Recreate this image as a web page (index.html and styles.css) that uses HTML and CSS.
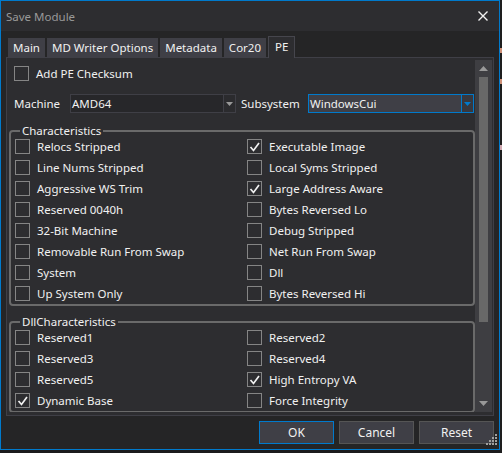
FILE: index.html
```html
<!DOCTYPE html>
<html>
<head>
<meta charset="utf-8">
<title>Save Module</title>
<link rel="stylesheet" href="styles.css">
</head>
<body>
<div class="window">
  <div class="titlebar">
    <span class="title">Save Module</span>
    <svg class="close" width="10" height="10" viewBox="0 0 10 10"><path d="M0.5 0.5L9.5 9.5M9.5 0.5L0.5 9.5" stroke="#f1f1f1" stroke-width="1.4"/></svg>
  </div>
  <div class="tabs">
    <div class="tab">Main</div>
    <div class="tab">MD Writer Options</div>
    <div class="tab">Metadata</div>
    <div class="tab">Cor20</div>
    <div class="tab active">PE</div>
  </div>
  <div class="panel">
    <div class="content">
      <div class="cb top-cb"><span class="box"></span><span>Add PE Checksum</span></div>
      <div class="machine-row">
        <span class="lbl lbl-machine">Machine</span>
        <div class="combo"><span class="combo-text">AMD64</span><span class="combo-btn"><svg width="7" height="4" viewBox="0 0 7 4"><path d="M0 0H7L3.5 4Z" fill="#999"/></svg></span></div>
        <span class="lbl lbl-sub">Subsystem</span>
        <div class="combo focus"><span class="combo-text">WindowsCui</span><span class="combo-btn"><svg width="7" height="4" viewBox="0 0 7 4"><path d="M0 0H7L3.5 4Z" fill="#007acc"/></svg></span></div>
      </div>
      <div class="group">
        <div class="group-title">Characteristics</div>
        <div class="grid">
          <div class="cb"><span class="box"></span><span>Relocs Stripped</span></div>
          <div class="cb"><span class="box"><svg width="13" height="13" viewBox="0 0 13 13"><path d="M2.5 7L5.5 10.5L11 3" fill="none" stroke="#f1f1f1" stroke-width="1.7"/></svg></span><span>Executable Image</span></div>
          <div class="cb"><span class="box"></span><span>Line Nums Stripped</span></div>
          <div class="cb"><span class="box"></span><span>Local Syms Stripped</span></div>
          <div class="cb"><span class="box"></span><span>Aggressive WS Trim</span></div>
          <div class="cb"><span class="box"><svg width="13" height="13" viewBox="0 0 13 13"><path d="M2.5 7L5.5 10.5L11 3" fill="none" stroke="#f1f1f1" stroke-width="1.7"/></svg></span><span>Large Address Aware</span></div>
          <div class="cb"><span class="box"></span><span>Reserved 0040h</span></div>
          <div class="cb"><span class="box"></span><span>Bytes Reversed Lo</span></div>
          <div class="cb"><span class="box"></span><span>32-Bit Machine</span></div>
          <div class="cb"><span class="box"></span><span>Debug Stripped</span></div>
          <div class="cb"><span class="box"></span><span>Removable Run From Swap</span></div>
          <div class="cb"><span class="box"></span><span>Net Run From Swap</span></div>
          <div class="cb"><span class="box"></span><span>System</span></div>
          <div class="cb"><span class="box"></span><span>Dll</span></div>
          <div class="cb"><span class="box"></span><span>Up System Only</span></div>
          <div class="cb"><span class="box"></span><span>Bytes Reversed Hi</span></div>
        </div>
      </div>
      <div class="group group-second">
        <div class="group-title">DllCharacteristics</div>
        <div class="grid">
          <div class="cb"><span class="box"></span><span>Reserved1</span></div>
          <div class="cb"><span class="box"></span><span>Reserved2</span></div>
          <div class="cb"><span class="box"></span><span>Reserved3</span></div>
          <div class="cb"><span class="box"></span><span>Reserved4</span></div>
          <div class="cb"><span class="box"></span><span>Reserved5</span></div>
          <div class="cb"><span class="box"><svg width="13" height="13" viewBox="0 0 13 13"><path d="M2.5 7L5.5 10.5L11 3" fill="none" stroke="#f1f1f1" stroke-width="1.7"/></svg></span><span>High Entropy VA</span></div>
          <div class="cb"><span class="box"><svg width="13" height="13" viewBox="0 0 13 13"><path d="M2.5 7L5.5 10.5L11 3" fill="none" stroke="#f1f1f1" stroke-width="1.7"/></svg></span><span>Dynamic Base</span></div>
          <div class="cb"><span class="box"></span><span>Force Integrity</span></div>
        </div>
      </div>
    </div>
    <div class="scrollbar">
      <div class="sb-arrow"><svg width="9" height="5" viewBox="0 0 9 5"><path d="M0 5L4.5 0L9 5Z" fill="#999"/></svg></div>
      <div class="sb-track"><div class="sb-thumb"></div></div>
      <div class="sb-arrow"><svg width="9" height="5" viewBox="0 0 9 5"><path d="M0 0L4.5 5L9 0Z" fill="#999"/></svg></div>
    </div>
  </div>
  <div class="footer">
    <button class="btn default">OK</button>
    <button class="btn">Cancel</button>
    <button class="btn">Reset</button>
  </div>
  <svg class="grip" width="12" height="12" viewBox="0 0 12 12">
    <g fill="#a0a0a0">
      <rect x="9" y="0" width="2" height="2"/>
      <rect x="6" y="3" width="2" height="2"/><rect x="9" y="3" width="2" height="2"/>
      <rect x="3" y="6" width="2" height="2"/><rect x="6" y="6" width="2" height="2"/><rect x="9" y="6" width="2" height="2"/>
      <rect x="0" y="9" width="2" height="2"/><rect x="3" y="9" width="2" height="2"/><rect x="6" y="9" width="2" height="2"/><rect x="9" y="9" width="2" height="2"/>
    </g>
  </svg>
</div>
<div class="behind">
  <div class="mark m1"></div>
  <div class="mark m2"></div>
  <div class="mark m3"></div>
</div>
</body>
</html>
```

FILE: styles.css
```css
* { box-sizing: border-box; }
html, body { margin: 0; padding: 0; }
body {
  width: 502px;
  height: 453px;
  overflow: hidden;
  background: #1b1b1c;
  display: flex;
  align-items: flex-start;
  font-family: "Noto Sans", "Open Sans", sans-serif;
  font-size: 11.5px;
  color: #f1f1f1;
}
.window {
  flex: none;
  width: 500px;
  height: 450px;
  border: 1px solid #007acc;
  background: #252526;
  position: relative;
  display: flex;
  flex-direction: column;
}
.titlebar {
  flex: none;
  height: 30px;
  background: #2d2d30;
  display: flex;
  align-items: center;
  justify-content: space-between;
  padding: 0 11px 0 5px;
}
.title { color: #999999; }
.close { display: block; }
.tabs {
  flex: none;
  height: 26px;
  display: flex;
  align-items: flex-end;
  padding-left: 7px;
  position: relative;
  z-index: 1;
}
.tab {
  height: 19px;
  line-height: 19px;
  padding: 0 5px;
  background: #3f3f46;
  margin-right: 2px;
  white-space: nowrap;
}
.tab.active {
  height: 22px;
  line-height: 20px;
  padding: 0 6px;
  background: #2d2d30;
  border: 1px solid #46464d;
  border-bottom: none;
  margin-bottom: -1px;
}
.panel {
  flex: none;
  height: 359px;
  margin: 0 5px;
  background: #2d2d30;
  border: 1px solid #3f3f46;
  padding: 2px 1px 3px 2px;
  display: flex;
}
.content {
  flex: 1;
  min-width: 0;
  overflow: hidden;
}
.cb {
  height: 21px;
  display: flex;
  align-items: center;
  gap: 7px;
  white-space: nowrap;
}
.box {
  flex: none;
  width: 15px;
  height: 15px;
  border: 1px solid #858585;
  display: flex;
}
.box svg { display: block; }
.top-cb {
  margin-top: 3px;
  padding-left: 5px;
}
.machine-row {
  margin-top: 10px;
  height: 19px;
  display: flex;
  align-items: center;
}
.lbl { white-space: nowrap; padding-left: 5px; }
.lbl-machine { width: 61px; }
.lbl-sub { width: 72px; }
.combo {
  flex: none;
  width: 166px;
  height: 19px;
  border: 1px solid #3f3f46;
  background: #27272a;
  display: flex;
}
.combo-text {
  flex: 1;
  padding-left: 1px;
  line-height: 17px;
}
.combo-btn {
  flex: none;
  width: 12px;
  border-left: 1px solid #3f3f46;
  background: #2b2b2e;
  display: flex;
  align-items: center;
  justify-content: center;
}
.combo-btn svg { display: block; }
.combo.focus {
  border-color: #007acc;
  background: #3f3f46;
}
.combo.focus .combo-btn {
  border-left-color: #007acc;
  background: #38383e;
}
.group {
  margin-top: 17px;
  border: 2px solid #6a6a6a;
  border-radius: 4px;
  padding-left: 4px;
}
.group-second { margin-top: 15px; }
.group-title {
  width: fit-content;
  line-height: 16px;
  margin: -9px 0 -3px 5px;
  padding: 0 2px;
  background: #2d2d30;
}
.grid {
  display: grid;
  grid-template-columns: 232px 1fr;
}
.scrollbar {
  flex: none;
  width: 17px;
  background: #3e3e42;
  display: flex;
  flex-direction: column;
}
.sb-arrow {
  flex: none;
  height: 17px;
  display: flex;
  align-items: center;
  justify-content: center;
}
.sb-arrow svg { display: block; }
.sb-track { flex: 1; }
.sb-thumb {
  width: 9px;
  height: 245px;
  margin: 0 4px;
  background: #686868;
}
.footer {
  flex: none;
  display: flex;
  justify-content: flex-end;
  gap: 5px;
  padding: 5px 5px 0 0;
}
.btn {
  width: 75px;
  height: 23px;
  padding: 0;
  margin: 0;
  background: #3f3f46;
  border: 1px solid #555555;
  color: #f1f1f1;
  font-family: inherit;
  font-size: 12px;
}
.btn.default { border-color: #007acc; }
.grip {
  position: absolute;
  right: 1px;
  bottom: 3px;
  display: block;
}
.behind {
  flex: none;
  width: 2px;
  height: 453px;
  background: #1e1e1e;
}
.mark { width: 2px; height: 5px; background: #ce9178; }
.m1 { margin-top: 48px; }
.m2 { margin-top: 26px; }
.m3 { margin-top: 61px; background: #d0a8b0; }
```
